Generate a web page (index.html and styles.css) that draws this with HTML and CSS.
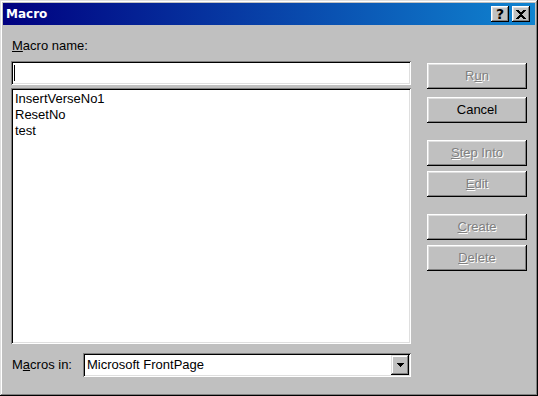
FILE: index.html
```html
<!DOCTYPE html>
<html>
<head>
<meta charset="utf-8">
<link rel="stylesheet" href="styles.css">
</head>
<body>
<div class="window">
  <div class="titlebar">
    <span class="title">Macro</span>
    <div class="caption-buttons">
      <div class="cap-btn help">?</div>
      <div class="cap-btn close">
        <svg width="10" height="9" viewBox="0 0 10 9" shape-rendering="crispEdges">
          <path d="M0 0h3v1h-3zM7 0h3v1h-3zM1 1h3v1h-3zM6 1h3v1h-3zM2 2h6v1h-6zM3 3h4v1h-4zM4 4h2v1h-2zM3 5h4v1h-4zM2 6h6v1h-6zM1 7h3v1h-3zM6 7h3v1h-3zM0 8h3v1h-3zM7 8h3v1h-3z" fill="#000"/>
        </svg>
      </div>
    </div>
  </div>
  <div class="client">
    <div class="left">
      <div class="label"><u>M</u>acro name:</div>
      <div class="field input"><span class="caret"></span></div>
      <div class="field list">
        <div class="item">InsertVerseNo1</div>
        <div class="item">ResetNo</div>
        <div class="item">test</div>
      </div>
      <div class="bottom-row">
        <div class="label inline">M<u>a</u>cros in:</div>
        <div class="field combo">
          <span class="combo-text">Microsoft FrontPage</span>
          <div class="drop-btn">
            <svg width="7" height="4" viewBox="0 0 7 4" shape-rendering="crispEdges"><path d="M0 0h7v1h-7zM1 1h5v1h-5zM2 2h3v1h-3zM3 3h1v1h-1z" fill="#000"/></svg>
          </div>
        </div>
      </div>
    </div>
    <div class="right">
      <div class="btn disabled">R<u>u</u>n</div>
      <div class="btn cancel">Cancel</div>
      <div class="btn disabled group"><u>S</u>tep Into</div>
      <div class="btn disabled pair"><u>E</u>dit</div>
      <div class="btn disabled group"><u>C</u>reate</div>
      <div class="btn disabled pair"><u>D</u>elete</div>
    </div>
  </div>
</div>
</body>
</html>
```
FILE: styles.css
```css
html, body {
  margin: 0;
  padding: 0;
  background: #c0c0c0;
}

body {
  font-family: "Liberation Sans", Arial, sans-serif;
  font-size: 13px;
  color: #000;
}

.window {
  width: 538px;
  height: 396px;
  box-sizing: border-box;
  padding: 3px;
  background: #c0c0c0;
  box-shadow: inset -1px -1px #000, inset 1px 1px #dfdfdf, inset -2px -2px #808080, inset 2px 2px #fff;
  display: flex;
  flex-direction: column;
}

.titlebar {
  height: 22px;
  background: linear-gradient(to right, #000080, #1084d0);
  display: flex;
  align-items: center;
  justify-content: space-between;
  padding: 0 5px 0 3px;
}

.title {
  color: #fff;
  font-family: "DejaVu Sans", Verdana, sans-serif;
  font-weight: bold;
  font-size: 12px;
}

.caption-buttons {
  display: flex;
  gap: 3px;
}

.cap-btn {
  width: 18px;
  height: 16px;
  box-sizing: border-box;
  background: #c0c0c0;
  box-shadow: inset -1px -1px #000, inset 1px 1px #fff, inset -2px -2px #808080, inset 2px 2px #dfdfdf;
  display: flex;
  align-items: center;
  justify-content: center;
}

.help {
  font-family: "DejaVu Sans", sans-serif;
  font-weight: bold;
  font-size: 14px;
  line-height: 16px;
}

.close svg {
  display: block;
}

.client {
  flex: 1;
  display: flex;
  gap: 16px;
  padding: 0 0 0 8px;
}

.left {
  width: 400px;
  display: flex;
  flex-direction: column;
}

.label {
  margin-top: 13px;
  padding-left: 1px;
  line-height: 16px;
  height: 16px;
}

.field {
  box-sizing: border-box;
  background: #fff;
  box-shadow: inset 1px 1px #808080, inset -1px -1px #fff, inset 2px 2px #000, inset -2px -2px #dfdfdf;
}

.input {
  margin-top: 7px;
  height: 24px;
  padding: 4px 0 0 3px;
}

.caret {
  display: block;
  width: 1px;
  height: 16px;
  background: #000;
}

.list {
  margin-top: 3px;
  height: 256px;
  padding: 3px 4px;
}

.item {
  line-height: 16px;
  height: 16px;
}

.bottom-row {
  margin-top: 9px;
  display: flex;
  align-items: center;
}

.label.inline {
  margin-top: 0;
  width: 71px;
}

.combo {
  width: 328px;
  height: 24px;
  display: flex;
  align-items: center;
  justify-content: space-between;
  padding: 2px 2px 2px 4px;
}

.combo-text {
  line-height: 16px;
}

.drop-btn {
  width: 18px;
  height: 20px;
  box-sizing: border-box;
  background: #c0c0c0;
  box-shadow: inset -1px -1px #000, inset 1px 1px #dfdfdf, inset -2px -2px #808080, inset 2px 2px #fff;
  display: flex;
  align-items: center;
  justify-content: center;
}

.drop-btn svg {
  display: block;
}

.right {
  width: 100px;
  display: flex;
  flex-direction: column;
  padding-top: 38px;
}

.btn {
  height: 26px;
  box-sizing: border-box;
  background: #c0c0c0;
  box-shadow: inset -1px -1px #000, inset 1px 1px #fff, inset -2px -2px #808080, inset 2px 2px #dfdfdf;
  display: flex;
  align-items: center;
  justify-content: center;
  line-height: 16px;
}

.btn.cancel {
  margin-top: 8px;
}

.btn.group {
  margin-top: 17px;
}

.btn.pair {
  margin-top: 5px;
}

.btn.disabled {
  color: #808080;
  text-shadow: 1px 1px 0 #fff;
}
```
